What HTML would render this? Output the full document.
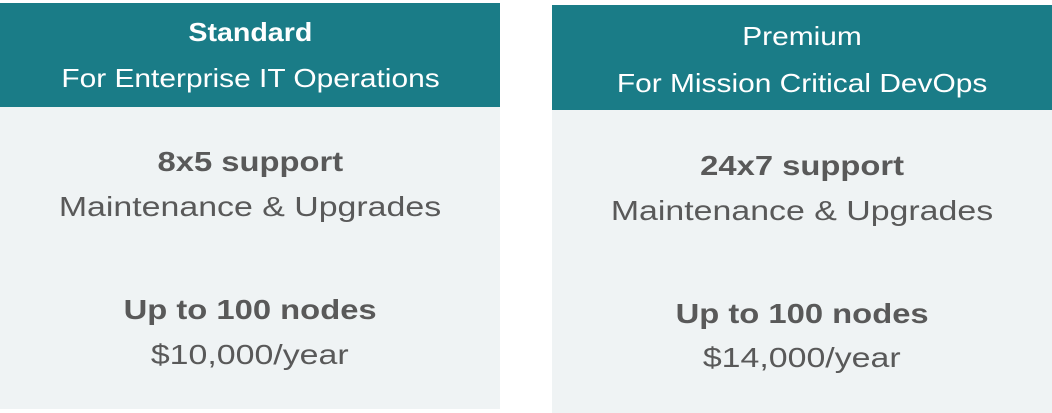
<!DOCTYPE html>
<html><head><meta charset="utf-8"><style>
body{margin:0;width:1052px;height:413px;background:#fff;position:relative;overflow:hidden;font-family:"Liberation Sans",sans-serif}
.c{position:absolute;width:500px}
.h{position:absolute;left:0;width:500px;background:#1a7c87}
.b{position:absolute;left:0;width:500px;background:#eff3f4}
.t{position:absolute;left:0;width:500px;text-align:center;height:40px;line-height:40px;white-space:nowrap}
.t span{display:inline-block}
.w{color:#fff;font-size:26px}
.w span{transform:scaleX(1.15)}
.g{color:#595959;font-size:28px}
.g span{transform:scaleX(1.21)}
.bd{font-weight:bold}
.g.bd span{transform:scaleX(1.17)}
.w.bd span{transform:scaleX(1.1)}
</style></head><body>
<div class="c" style="left:0;top:0;height:413px">
<div class="h" style="top:3px;height:104px"></div>
<div class="b" style="top:107px;height:302px"></div>
<div class="t w bd" style="top:12px"><span>Standard</span></div>
<div class="t w" style="top:58px"><span>For Enterprise IT Operations</span></div>
<div class="t g bd" style="top:142px"><span>8x5 support</span></div>
<div class="t g" style="top:187px"><span>Maintenance &amp; Upgrades</span></div>
<div class="t g bd" style="top:290px"><span>Up to 100 nodes</span></div>
<div class="t g" style="top:335px"><span>$10,000/year</span></div>
</div>
<div class="c" style="left:552px;top:0;height:413px">
<div class="h" style="top:5px;height:105px"></div>
<div class="b" style="top:110px;height:303px"></div>
<div class="t w" style="top:16px"><span>Premium</span></div>
<div class="t w" style="top:63px"><span>For Mission Critical DevOps</span></div>
<div class="t g bd" style="top:146px"><span>24x7 support</span></div>
<div class="t g" style="top:191px"><span>Maintenance &amp; Upgrades</span></div>
<div class="t g bd" style="top:294px"><span>Up to 100 nodes</span></div>
<div class="t g" style="top:338px"><span>$14,000/year</span></div>
</div>
</body></html>
